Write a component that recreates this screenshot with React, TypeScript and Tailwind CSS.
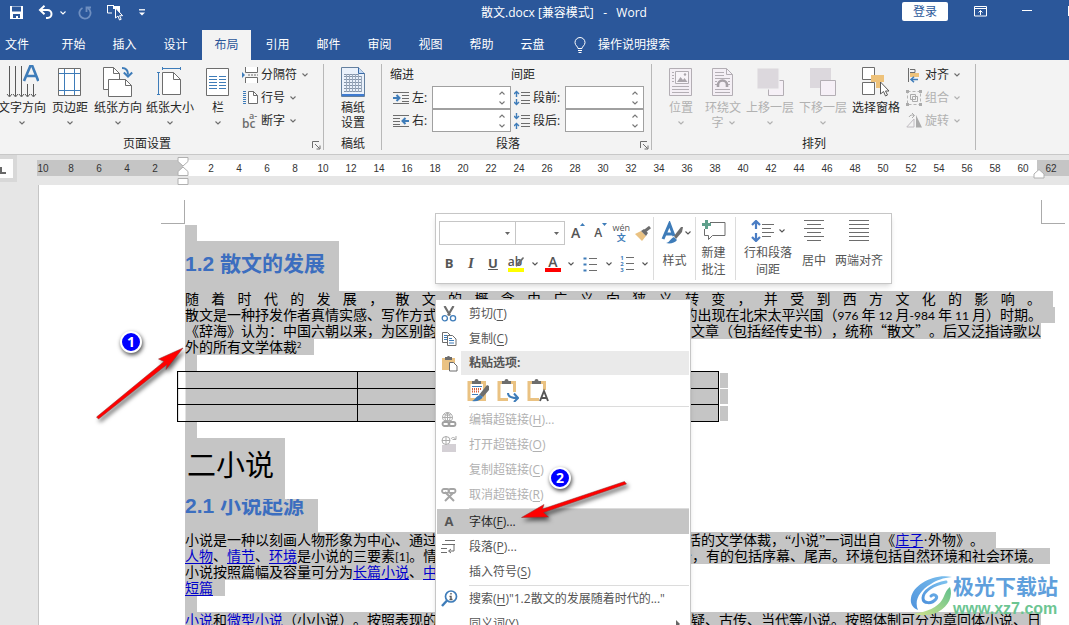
import type { ReactNode } from 'react'
import { clsx } from 'clsx'

const tabs = ['开始', '插入', '设计', '布局', '引用', '邮件', '审阅', '视图', '帮助', '云盘']

const rulerLeft = [10, 8, 6, 4, 2]
const rulerRight = Array.from({ length: 30 }, (_, i) => (i + 1) * 2)

const tableRows = ['h-[17px]', 'h-4', 'h-[17px]']

type IconProps = {
  w: number
  h: number
  children: ReactNode
  className?: string
}

function Icon({ w, h, children, className }: IconProps) {
  return (
    <svg
      width={w}
      height={h}
      viewBox={`0 0 ${w} ${h}`}
      fill="none"
      aria-hidden="true"
      className={clsx('shrink-0', className)}
    >
      {children}
    </svg>
  )
}

function Chevron({ className }: { className?: string }) {
  return (
    <Icon w={6} h={4} className={className}>
      <path d="M.5 .5 3 3 5.5 .5" stroke="currentColor" strokeWidth="1.1" />
    </Icon>
  )
}

/* ---------- ribbon icons ---------- */

const TextDirectionIcon = () => (
  <Icon w={34} h={34}>
    <path d="M4.500 1v30M10.500 1v30M16.500 1v30M22.500 19v12M28.500 19v12" stroke="#595959" />
    <path
      d="M2 29l2.500 3 2.500-3M8 29l2.500 3 2.500-3M14 29l2.500 3 2.500-3M20 29l2.500 3 2.500-3M26 29l2.500 3 2.500-3"
      stroke="#595959"
    />
    <path d="M19 16 25.300 1h2L33.300 16M21 11h10.500" stroke="#3e7cb9" strokeWidth="2.600" />
  </Icon>
)

const MarginsIcon = () => (
  <Icon w={24} h={30}>
    <path d="M.5 1.500h22v27H.5z" fill="#fff" stroke="#6d6d6d" />
    <path d="M6.500 2v26M16.500 2v26M1 6.500h21M1 23.500h21" stroke="#3e7cb9" />
  </Icon>
)

const OrientationIcon = () => (
  <Icon w={30} h={32}>
    <path d="M.5 1.500h10l6 6v16H.5z" fill="#fff" stroke="#6d6d6d" />
    <path d="M10.500 1.500v6h6" stroke="#6d6d6d" />
    <path d="M5.500 13.500h17l6 6v11h-23z" fill="#fff" stroke="#6d6d6d" />
    <path d="M22.500 13.500v6h6" stroke="#6d6d6d" />
    <path d="M19 2c4.500 0 6 2.500 6 6.500M20.800 6.500l4.200 4 4.200-4" stroke="#3e7cb9" strokeWidth="2" />
  </Icon>
)

const SizeIcon = () => (
  <Icon w={26} h={30}>
    <path d="M5.500 5.500h11l7 7v15h-18z" fill="#fff" stroke="#6d6d6d" />
    <path d="M16.500 5.500v7h7" stroke="#6d6d6d" />
    <path d="M5.500 1.500h18M5.500 0v3M23.500 0v3M1.500 5.500v22M0 5.500h3M0 27.500h3" stroke="#3e7cb9" />
  </Icon>
)

const ColumnsIcon = () => (
  <Icon w={24} h={30}>
    <path d="M.5 1.500h22v27H.5z" fill="#fff" stroke="#6d6d6d" />
    <path
      d="M3 9.500h8M3 12.500h8M3 15.500h8M3 18.500h8M3 21.500h8M13 9.500h7M13 12.500h7M13 15.500h7M13 18.500h7M13 21.500h7"
      stroke="#3e7cb9"
    />
  </Icon>
)

const BreaksIcon = () => (
  <Icon w={16} h={16}>
    <path d="M3.500 0v5.500h12V0M3.500 16v-5.500h12V16" fill="#fff" stroke="#6d6d6d" />
    <path d="M6 8h10" stroke="#6d6d6d" strokeDasharray="2 1" />
    <path d="M0 5v6l3-3z" fill="#3e7cb9" />
  </Icon>
)

const LineNumbersIcon = () => (
  <Icon w={16} h={16}>
    <path d="M6.500 1.500h5l4 4v8h-9z" fill="#fff" stroke="#6d6d6d" />
    <path d="M11.500 1.500v4h4" stroke="#6d6d6d" />
    <path d="M2.500 1v14" stroke="#3e7cb9" strokeWidth="3" strokeDasharray="1 1" />
  </Icon>
)

const HyphenIcon = () => (
  <Icon w={16} h={16} className="overflow-visible">
    <text x="0" y="15" fontSize="12" fontWeight="600" fill="#6d6d6d">
      bc
    </text>
    <text x="7" y="6" fontSize="9" fontWeight="600" fill="#6d6d6d">
      a-
    </text>
  </Icon>
)

const ManuscriptIcon = () => (
  <Icon w={24} h={32}>
    <path d="M.5 1.500h17l6 6v23H.5z" fill="#eaf1fb" stroke="#64809f" />
    <path d="M17.500 1.500v6h6" fill="#c4d9f3" stroke="#3a6aa5" />
    <path
      d="M3 8.500h14M3 10.500h18M3 13.500h18M3 16.500h18M3 19.500h18M3 22.500h18M3 25.500h18"
      stroke="#8594a8"
      strokeWidth="1"
    />
    <path d="M5.500 8v18M8.500 8v18M11.500 8v18M14.500 8v18M17.500 8v18M20.500 10v16" stroke="#9aa9bd" />
    <path d="M1 29h22" stroke="#3f7bd0" strokeWidth="2" />
  </Icon>
)

function IndentIcon({ right }: { right?: boolean }) {
  return (
    <Icon w={16} h={14}>
      {right ? (
        <>
          <path d="M0 1.500h16M0 4.500h7M0 7.500h7M0 10.500h7M0 12.500h16" stroke="#6d6d6d" />
          <path d="M16 7H10M12.500 4 9.500 7l3 3" stroke="#3e7cb9" strokeWidth="2" />
        </>
      ) : (
        <>
          <path d="M0 1.500h16M9 4.500h7M9 7.500h7M9 10.500h7M0 12.500h16" stroke="#6d6d6d" />
          <path d="M0 7h6M3.500 4l3 3-3 3" stroke="#3e7cb9" strokeWidth="2" />
        </>
      )}
    </Icon>
  )
}

function SpacingIcon({ after }: { after?: boolean }) {
  return (
    <Icon w={16} h={16}>
      <path d="M7 2.500h9M7 5.500h9M7 10.500h9M7 13.500h9" stroke="#6d6d6d" />
      {after ? (
        <path d="M2.500 0v5M0 3l2.500 2.500L5 3M2.500 16v-5M0 13l2.500-2.500L5 13" stroke="#3e7cb9" strokeWidth="1.400" />
      ) : (
        <path d="M2.500 7V2M0 4l2.500-2.500L5 4M2.500 9v5M0 12l2.500 2.500L5 12" stroke="#3e7cb9" strokeWidth="1.400" />
      )}
    </Icon>
  )
}

const PositionIcon = () => (
  <Icon w={24} h={30}>
    <path d="M.5 1.500h22v27H.5z" fill="#f4eff5" stroke="#b3aeb4" />
    <path d="M3 5.500h2M3 8.500h2M3 11.500h2M3 14.500h2M3 19.500h17M3 22.500h17M3 25.500h17" stroke="#b3aeb4" />
    <path d="M6.500 4.500h13v12h-13z" fill="#f8f4f9" stroke="#b3aeb4" />
    <path d="M8 15l3.500-5 2.500 3 1.500-2 3 4z" fill="#aaa5ab" />
    <circle cx="16" cy="7.500" r="1.200" fill="#aaa5ab" />
  </Icon>
)

const WrapIcon = () => (
  <Icon w={22} h={30}>
    <path d="M.5 1.500h14l6 6v21H.5z" fill="#f4eff5" stroke="#b3aeb4" />
    <path d="M14.500 1.500v6h6" stroke="#b3aeb4" />
    <path d="M3 5.500h9M3 8.500h9M3 11.500h15M3 22.500h15M3 25.500h15M3 14.500h2M3 17.500h2M16 14.500h2M16 17.500h2" stroke="#b3aeb4" />
    <path d="M6 20v-2a4.500 4.500 0 0 1 9 0v2" stroke="#a6a1a7" strokeWidth="2.600" />
  </Icon>
)

const ForwardIcon = () => (
  <Icon w={27} h={30}>
    <path d="M11.500 13.500h15v15h-15z" fill="#f6f0f7" stroke="#b3aeb4" />
    <path d="M0 1h22v21H0z" fill="#dcd8dd" stroke="#f2f2f2" strokeWidth="1" />
  </Icon>
)

const BackwardIcon = () => (
  <Icon w={27} h={30}>
    <path d="M0 1h21v20H0z" fill="#dcd8dd" />
    <path d="M10.500 13.500h15v15h-15z" fill="#f6f0f7" stroke="#b3aeb4" />
  </Icon>
)

const SelectionPaneIcon = () => (
  <Icon w={28} h={32}>
    <path d="M.5 1.500h12v12H.5zM.5 16.500h12v12H.5z" fill="#fff" stroke="#6d6d6d" />
    <path d="M9 9h13v7h-4v6h-4v-6H9z" fill="#eec27a" />
    <path d="M18.500 16v12l3-2.500 2 4.500 2-1-2-4h3.500z" fill="#fff" stroke="#595959" />
  </Icon>
)

const AlignIcon = () => (
  <Icon w={14} h={16}>
    <path d="M1.500 1v14M3 2.500h5v3H3" stroke="#6d6d6d" />
    <path d="M3 6h9v4H3z" fill="#eec27a" />
    <path d="M11 12.500H4M7 9.800 4 12.500 7 15.200" stroke="#3e7cb9" strokeWidth="1.500" />
  </Icon>
)

const GroupIcon = () => (
  <Icon w={16} h={16}>
    <path d="M1.500 1.500h13v13h-13z" stroke="#b5b5b5" strokeDasharray="3 2" />
    <path d="M4.500 4.500h5v5h-5zM6.500 6.500h5v5h-5z" stroke="#ababab" />
    <path d="M0 0h3v3H0zM13 0h3v3h-3zM0 13h3v3H0zM13 13h3v3h-3z" fill="#ababab" />
  </Icon>
)

const RotateIcon = () => (
  <Icon w={16} h={16}>
    <path d="M8 6v8H.800z" stroke="#c0bcc1" />
    <path d="M10 2v12.500h6z" fill="#ababab" />
    <path d="M3 4c1-2 3-2.500 5-1.500M6 0l2.500 2.500L6 5" stroke="#ababab" />
  </Icon>
)

const LauncherIcon = () => (
  <Icon w={9} h={9}>
    <path d="M.5 7V.5H7M3 3l4.500 4.500M8 4.500V8H4.500" stroke="#6d6d6d" />
  </Icon>
)

/* ---------- ribbon parts ---------- */

type BigButtonProps = {
  icon: ReactNode
  label: string
  className: string
  chevron?: boolean
  disabled?: boolean
}

function BigButton({ icon, label, className, chevron = true, disabled }: BigButtonProps) {
  return (
    <button
      type="button"
      disabled={disabled}
      className={clsx(
        'flex shrink-0 flex-col items-center whitespace-nowrap leading-[15px]',
        disabled ? 'text-[#b1b1b1]' : 'text-[#262626]',
        className
      )}
    >
      <span className="flex h-[37px] items-center">{icon}</span>
      <span>{label}</span>
      {chevron && (
        <span className="flex h-[15px] items-center">
          <Chevron className={disabled ? '' : 'text-[#6d6d6d]'} />
        </span>
      )}
    </button>
  )
}

function SmallButton({ icon, label, disabled }: { icon: ReactNode; label: string; disabled?: boolean }) {
  return (
    <button
      type="button"
      disabled={disabled}
      className={clsx('flex h-[23px] items-center gap-[3px]', disabled ? 'text-[#b1b1b1]' : 'text-[#262626]')}
    >
      <span className="flex w-4 justify-center">{icon}</span>
      <span>{label}</span>
      <Chevron className={clsx('ml-0.5', !disabled && 'text-[#6d6d6d]')} />
    </button>
  )
}

type RibbonGroupProps = {
  title: string
  className: string
  titleClass?: string
  launcher?: boolean
  children: ReactNode
}

function RibbonGroup({ title, className, titleClass, launcher, children }: RibbonGroupProps) {
  return (
    <section className={clsx('relative flex shrink-0 flex-col pt-[3px]', className)}>
      <div className="flex h-[73px]">{children}</div>
      <div className="flex h-4 items-center">
        <h2 className={clsx('flex-1 text-center', titleClass)}>{title}</h2>
      </div>
      {launcher && (
        <button type="button" aria-label={title + '设置'} className="absolute right-[3px] bottom-1">
          <LauncherIcon />
        </button>
      )}
      <span className="absolute top-1 right-0 bottom-1 w-px bg-[#b8b8b8]" />
    </section>
  )
}

function SpinField({ id, label, icon, labelClass }: { id: string; label: string; icon: ReactNode; labelClass: string }) {
  return (
    <div className="flex h-[23px] items-center">
      <label htmlFor={id} className={clsx('flex items-center gap-[3px] pl-[3px] whitespace-nowrap', labelClass)}>
        {icon}
        {label}
      </label>
      <div className="flex h-[23px] w-[79px] items-center border border-[#a0a0a0] bg-white text-[#777]">
        <input id={id} type="text" className="h-full min-w-0 flex-1 bg-transparent px-1 outline-none" />
        <span className="flex flex-col gap-[6px] pr-[5px]">
          <Chevron className="rotate-180" />
          <Chevron />
        </span>
      </div>
    </div>
  )
}

function TitleBar() {
  return (
    <header className="flex h-[30px] shrink-0 text-white">
      <div className="flex h-[25px] w-[226px] shrink-0 items-center pl-[9px]">
        <button type="button" aria-label="保存">
          <Icon w={15} h={15}>
            <path d="M1 1h13v13H1z" fill="#fff" />
            <path d="M3 1.500h9v5H3zM4 9h7v4H9v-2H7v2H4z" fill="#2b579a" />
          </Icon>
        </button>
        <button type="button" aria-label="撤消" className="ml-[14px]">
          <Icon w={16} h={15}>
            <path d="M2 5h7.500a4 4 0 0 1 0 8H8M6.500 .8 2 5l4.500 4.200" stroke="#fff" strokeWidth="2" />
          </Icon>
        </button>
        <Chevron className="ml-1.5" />
        <button type="button" aria-label="重复" className="ml-3">
          <Icon w={14} h={14}>
            <path d="M4.500 2A5.600 5.600 0 1 0 10 2.300M8.500 6V1.500H13" stroke="#6f8fc0" strokeWidth="1.800" />
          </Icon>
        </button>
        <button type="button" aria-label="选择对象" className="ml-[14px]">
          <Icon w={17} h={17}>
            <path d="M1 1.500h7M1.500 1v8H6" stroke="#fff" />
            <path d="M7 2h7v8h-3V5H7z" fill="#fff" />
            <path d="M9.500 4v10l2.500-2 1.500 4 1.700-.7-1.600-3.600h3z" fill="#2b579a" stroke="#fff" />
          </Icon>
        </button>
        <button type="button" aria-label="自定义快速访问工具栏" className="ml-4">
          <Icon w={6} h={7}>
            <path d="M0 .8h6" stroke="#fff" strokeWidth="1.300" />
            <path d="M0 3.500h6l-3 3z" fill="#fff" />
          </Icon>
        </button>
      </div>
      <h1 className="h-[25px] flex-1 text-center text-xs leading-[25px] whitespace-pre">
        散文.docx [兼容模式]   -   Word
      </h1>
      <div className="flex w-[167px] shrink-0 items-start">
        <button type="button" className="mt-0.5 h-[19px] w-[46px] rounded-xs bg-white text-xs leading-[19px] text-[#2b579a]">
          登录
        </button>
        <button type="button" aria-label="功能区显示选项" className="mt-1.5 ml-[26px]">
          <Icon w={13} h={11}>
            <path d="M.5 .5h12v9.500H.5zM.5 2.500h12M6.500 9V4.500M4.500 6.500l2-2 2 2" stroke="#fff" />
          </Icon>
        </button>
        <button type="button" aria-label="最小化" className="mt-2.5 ml-[35px] h-px w-2.5 bg-white" />
        <button type="button" aria-label="最大化" className="mt-1.5 ml-auto h-2.5 w-px bg-white" />
      </div>
    </header>
  )
}

function TabBar() {
  return (
    <nav className="flex h-[30px] shrink-0 text-xs leading-7 text-white">
      <button type="button" className="w-12 shrink-0 pl-[5px] text-left">
        文件
      </button>
      {tabs.map((tab) => (
        <button
          key={tab}
          type="button"
          className={clsx('w-[51px] shrink-0 border-x border-[#2b579a]', tab === '布局' && 'bg-[#f3f3f3] text-[#2b579a]')}
        >
          {tab}
        </button>
      ))}
      <button type="button" className="ml-4 flex items-center gap-3">
        <Icon w={12} h={16}>
          <path d="M4 11.500c0-2-3-3-3-6a5 5 0 0 1 10 0c0 3-3 4-3 6zM4 13.500h4M4.500 15.500h3" stroke="#fff" />
        </Icon>
        操作说明搜索
      </button>
    </nav>
  )
}

function Ribbon() {
  return (
    <div className="flex h-[95px] shrink-0 overflow-hidden border-b border-[#c8c8c8] bg-[#f3f3f3] text-xs text-[#262626]">
      <RibbonGroup title="页面设置" launcher className="w-[324px]" titleClass="pr-[30px]">
        <BigButton icon={<TextDirectionIcon />} label="文字方向" className="-ml-0.5 w-12" />
        <BigButton icon={<MarginsIcon />} label="页边距" className="w-12" />
        <BigButton icon={<OrientationIcon />} label="纸张方向" className="w-12" />
        <BigButton icon={<SizeIcon />} label="纸张大小" className="w-14" />
        <BigButton icon={<ColumnsIcon />} label="栏" className="w-10" />
        <div className="pl-1">
          <SmallButton icon={<BreaksIcon />} label="分隔符" />
          <SmallButton icon={<LineNumbersIcon />} label="行号" />
          <SmallButton icon={<HyphenIcon />} label="断字" />
        </div>
      </RibbonGroup>
      <RibbonGroup title="稿纸" className="w-[58px]">
        <button type="button" className="mx-auto flex w-6 flex-col items-center leading-[15px]">
          <span className="flex h-[37px] items-center">
            <ManuscriptIcon />
          </span>
          稿纸设置
        </button>
      </RibbonGroup>
      <RibbonGroup title="段落" launcher className="w-[270px]" titleClass="pr-[18px]">
        <div className="pl-2">
          <h3 className="leading-[23px]">缩进</h3>
          <SpinField id="indent-left" label="左:" icon={<IndentIcon />} labelClass="w-[42px]" />
          <SpinField id="indent-right" label="右:" icon={<IndentIcon right />} labelClass="w-[42px]" />
        </div>
        <div>
          <h3 className="leading-[23px]">间距</h3>
          <SpinField id="space-before" label="段前:" icon={<SpacingIcon />} labelClass="w-[54px]" />
          <SpinField id="space-after" label="段后:" icon={<SpacingIcon after />} labelClass="w-[54px]" />
        </div>
      </RibbonGroup>
      <RibbonGroup title="排列" className="w-[324px]">
        <BigButton icon={<PositionIcon />} label="位置" disabled className="ml-2 w-[42px]" />
        <button type="button" disabled className="flex w-[42px] flex-col items-center leading-[15px] text-[#b1b1b1]">
          <span className="flex h-[37px] items-center">
            <WrapIcon />
          </span>
          <span>环绕文</span>
          <span className="flex items-center gap-[5px]">
            字<Chevron />
          </span>
        </button>
        <BigButton icon={<ForwardIcon />} label="上移一层" disabled className="w-[52px]" />
        <BigButton icon={<BackwardIcon />} label="下移一层" disabled className="w-[54px]" />
        <BigButton icon={<SelectionPaneIcon />} label="选择窗格" chevron={false} className="w-[52px]" />
        <div className="pl-1">
          <SmallButton icon={<AlignIcon />} label="对齐" />
          <SmallButton icon={<GroupIcon />} label="组合" disabled />
          <SmallButton icon={<RotateIcon />} label="旋转" disabled />
        </div>
      </RibbonGroup>
    </div>
  )
}

function Ruler() {
  return (
    <div className="flex h-[30px] shrink-0 overflow-hidden font-['Liberation_Sans',sans-serif] text-[10px] leading-[18px] text-[#333]">
      <div className="mr-5 h-[27px] w-[17px] shrink-0 border-y-4 border-r-4 border-[#d8d8d8] bg-[#fdfdfd]">
        <Icon w={6} h={19}>
          <path d="M1 8v6h5" stroke="#666" strokeWidth="2" />
        </Icon>
      </div>
      <div className="mt-[5px] flex h-4 w-[146px] shrink-0 justify-end overflow-hidden bg-[#c5c5c5] pr-[14px]">
        {rulerLeft.map((n) => (
          <span key={n} className="w-7 shrink-0 text-center">
            {n}
          </span>
        ))}
      </div>
      <div className="relative mt-[5px] flex h-4 shrink-0 bg-white pl-[14px]">
        {rulerRight.map((n) => (
          <span key={n} className="w-7 shrink-0 text-center">
            {n}
          </span>
        ))}
        <Icon w={12} h={28} className="absolute -top-[3px] -left-[6px]">
          <path d="M1 .5h10v4L6 9 1 4.500zM1 18.500v-4L6 10l5 4.500v4zM1 21.500h10v6H1z" fill="#fff" stroke="#b0b0b0" />
        </Icon>
        <Icon w={12} h={10} className="absolute top-[9px] -right-[8px] z-10">
          <path d="M1 9V5l5-4.500L11 5v4z" fill="#fff" stroke="#b0b0b0" />
        </Icon>
      </div>
      <div className="mt-[5px] h-4 flex-1 bg-[#c5c5c5]">
        <span className="block w-7 text-center">62</span>
      </div>
    </div>
  )
}

/* ---------- document ---------- */

function Link({ children }: { children: ReactNode }) {
  return (
    <a href="#" className="text-[#0000cc] underline underline-offset-2">
      {children}
    </a>
  )
}

function Num({ children }: { children: ReactNode }) {
  return <span className="font-['Lato',sans-serif] text-xs leading-[14px]">{children}</span>
}

// One laid out line: the start and the end of the text sit at the two margins.
function Line({ start, end, className }: { start: ReactNode; end: ReactNode; className: string }) {
  return (
    <div className={clsx('flex h-4 justify-between bg-[#c5c5c5] whitespace-nowrap', className)}>
      <span>{start}</span>
      <span>{end}</span>
    </div>
  )
}

const EmptyLine = () => <div className="h-4 w-3 bg-[#c5c5c5]" />

function DocumentPage() {
  return (
    <article className="relative ml-[38px] flex-1 overflow-hidden border-l border-[#c5c5c5] bg-white pt-10 pl-[146px] font-['Noto_Sans_CJK_SC',sans-serif] text-sm leading-[14px] text-black [text-spacing-trim:space-all]">
      <span className="absolute top-[15px] left-[122px] h-6 w-6 border-r border-b border-[#ababab]" />
      <span className="absolute top-[15px] left-[1002px] h-6 w-6 border-b border-l border-[#ababab]" />
      <EmptyLine />
      <h2 className="h-[50px] w-[154px] bg-[#c5c5c5] font-['Liberation_Sans','Noto_Sans_CJK_SC',sans-serif] text-[21px] leading-[46px] font-bold text-[#3c6ebf]">
        1.2 散文的发展
      </h2>
      <p className="h-4 w-[868px] bg-[#c5c5c5] pr-3 whitespace-nowrap [text-align-last:justify]">
        随着时代的发展，散文的概念由广义向狭义转变，并受到西方文化的影响。
      </p>
      <Line
        className="w-[870px] pr-[13px]"
        start="散文是一种抒发作者真情实感、写作方式"
        end={
          <>
            的出现在北宋太平兴国（<Num>976 </Num>年<Num> 12 </Num>月<Num>-984 </Num>年<Num> 11 </Num>月）时期。
          </>
        }
      />
      <Line
        className="w-[856px]"
        start="《辞海》认为：中国六朝以来，为区别韵"
        end="文章（包括经传史书），统称“散文”。后又泛指诗歌以"
      />
      <p className="h-4 w-[129px] bg-[#c5c5c5]">
        外的所有文学体裁<span className="align-[4px] text-[8px] leading-none">2</span>
      </p>
      <EmptyLine />
      <table className="-ml-2 table-fixed border-collapse">
        <tbody>
          {tableRows.map((height, i) => (
            <tr key={i} className={height}>
              <td className="w-[180px] border border-black bg-linear-to-r from-white from-[7px] to-[#c5c5c5] to-[7px] p-0" />
              <td className="w-[180px] border border-black bg-[#c5c5c5] p-0" />
              <td className="w-[181px] border border-black bg-[#c5c5c5] p-0" />
              <td className="p-0 pl-px">
                <div className="h-[15px] w-2 bg-[#c5c5c5]" />
              </td>
            </tr>
          ))}
        </tbody>
      </table>
      <EmptyLine />
      <h1 className="h-[61px] w-[100px] bg-[#c5c5c5] pl-0.5 text-[29px] leading-[50px]">二小说</h1>
      <h2 className="h-[33px] w-[133px] overflow-hidden bg-[#c5c5c5] font-['Liberation_Sans','Noto_Sans_CJK_SC',sans-serif] text-[21px] leading-[13px] font-bold text-[#3c6ebf]">
        2.1 小说起源
      </h2>
      <Line
        className="w-[811px] pr-3"
        start="小说是一种以刻画人物形象为中心、通过"
        end={
          <>
            活的文学体裁，<span className="font-['Liberation_Serif',serif]">“</span>小说
            <span className="font-['Liberation_Serif',serif]">”</span>一词出自《<Link>庄子</Link>
            <span className="font-['Liberation_Serif',serif]">·</span>外物》。
          </>
        }
      />
      <Line
        className="w-[865px] pr-2"
        start={
          <>
            <Link>人物</Link>、<Link>情节</Link>、<Link>环境</Link>是小说的三要素<Num>[1]</Num>。情
          </>
        }
        end="分，有的包括序幕、尾声。环境包括自然环境和社会环境。"
      />
      <p className="h-4 w-[440px] bg-[#c5c5c5]">
        小说按照篇幅及容量可分为<Link>长篇小说</Link>、<Link>中</Link>
      </p>
      <p className="h-4 w-10 bg-[#c5c5c5]">
        <Link>短篇</Link>
      </p>
      <EmptyLine />
      <Line
        className="w-[856px]"
        start={
          <>
            <Link>小说</Link>和<Link>微型小说</Link>（小小说）。按照表现的
          </>
        }
        end="疑、古传、当代等小说。按照体制可分为章回体小说、日"
      />
    </article>
  )
}

/* ---------- floating toolbar ---------- */

function Combo({ label, className }: { label: string; className: string }) {
  return (
    <div className={clsx('flex h-6 items-center border border-[#c6c6c6]', className)}>
      <input type="text" aria-label={label} className="h-full min-w-0 flex-1 bg-transparent px-1 outline-none" />
      <Icon w={5} h={3} className="mr-[5px]">
        <path d="M0 0h5L2.500 3z" fill="#666" />
      </Icon>
    </div>
  )
}

function BrushIcon() {
  return (
    <Icon w={16} h={15}>
      <path d="M0 8l6-3 5 5-4 5z" fill="#eac282" />
      <path d="M6 5l3-2 4 4-2 3z" fill="#6d6d6d" />
      <path d="M10 5l5-4" stroke="#6d6d6d" strokeWidth="3" />
    </Icon>
  )
}

function ListLines({ numbered }: { numbered?: boolean }) {
  return (
    <span className="flex gap-0.5">
      {numbered ? (
        <span aria-hidden="true" className="flex w-1 flex-col text-[6px] leading-[6px] font-bold text-[#3e7cb9]">
          <span>1</span>
          <span>2</span>
          <span>3</span>
        </span>
      ) : (
        <Icon w={4} h={17}>
          <path d="M.5 1.500h3v2h-3zM.5 7.500h3v2h-3zM.5 13.500h3v2h-3z" fill="#3e7cb9" />
        </Icon>
      )}
      <Icon w={8} h={17}>
        <path d="M0 2.500h8M0 8.500h8M0 14.500h8" stroke="#6d6d6d" />
      </Icon>
    </span>
  )
}

function TextLines({ widths }: { widths: number[] }) {
  return (
    <Icon w={20} h={22}>
      {widths.map((w, i) => (
        <path key={i} d={`M${(20 - w) / 2} ${i * 4 + 0.5}h${w}`} stroke="#6d6d6d" />
      ))}
    </Icon>
  )
}

function MiniToolbar() {
  return (
    <div
      role="toolbar"
      aria-label="格式"
      className="absolute top-[58px] left-[435px] flex h-[71px] w-[457px] border border-[#c6c6c6] bg-white py-[3px] text-xs text-[#555] shadow-md"
    >
      <div className="w-[218px] border-r border-[#dcdcdc] pt-1 pl-[3px]">
        <div className="flex items-center">
          <Combo label="字体" className="w-[77px]" />
          <Combo label="字号" className="-ml-px w-[50px]" />
          <button type="button" aria-label="增大字号" className="ml-1.5 flex items-start">
            <span aria-hidden="true" className="text-sm leading-5 font-semibold">A</span>
            <Icon w={5} h={3}>
              <path d="M0 3h5L2.500 0z" fill="#3e7cb9" />
            </Icon>
          </button>
          <button type="button" aria-label="减小字号" className="ml-[9px] flex items-start">
            <span aria-hidden="true" className="text-xs leading-5 font-semibold">A</span>
            <Icon w={5} h={3}>
              <path d="M0 0h5L2.500 3z" fill="#3e7cb9" />
            </Icon>
          </button>
          <button type="button" className="ml-1.5 flex w-4 flex-col items-center text-[9px] leading-[10px]">
            <span>wén</span>
            <span className="font-bold text-[#3e7cb9]">文</span>
          </button>
          <button type="button" aria-label="格式刷" className="ml-1.5">
            <BrushIcon />
          </button>
        </div>
        <div className="mt-[7px] flex h-6 items-center">
          <button type="button" className="w-5 text-[13px] font-bold">B</button>
          <button type="button" className="w-6 font-['Liberation_Serif',serif] text-[15px] font-bold italic">I</button>
          <button type="button" className="w-5 text-[13px] font-bold underline">U</button>
          <button type="button" aria-label="突出显示" className="ml-[5px] flex w-4 flex-col items-center">
            <span className="flex h-3 items-center text-xs font-semibold">
              <span aria-hidden="true">ab</span>
              <Icon w={8} h={12} className="-ml-1.5">
                <path d="M0 11l1-4 6-6 1 1-5 7z" fill="#6d6d6d" />
              </Icon>
            </span>
            <span className="h-1 w-4 bg-[#ffff00]" />
          </button>
          <Chevron className="ml-2" />
          <button type="button" aria-label="字体颜色" className="ml-[7px] flex flex-col items-center">
            <span aria-hidden="true" className="h-3 text-sm leading-3 font-semibold">A</span>
            <span className="h-1 w-4 bg-[#ff0000]" />
          </button>
          <Chevron className="ml-[7px]" />
          <button type="button" aria-label="项目符号" className="ml-[9px]">
            <ListLines />
          </button>
          <Chevron className="ml-[9px]" />
          <button type="button" aria-label="编号" className="ml-2">
            <ListLines numbered />
          </button>
          <Chevron className="ml-2" />
        </div>
      </div>
      <button type="button" className="flex w-[42px] flex-col items-center border-r border-[#dcdcdc] pt-1">
        <span className="flex items-center">
          <Icon w={26} h={24}>
            <path d="M4 18 10.500 3 15 15M6.500 13h7" stroke="#3e7cb9" strokeWidth="3" />
            <path d="M15 15 22 6l2 0-1 5-6 7z" fill="#6d6d6d" />
            <path d="M7 22c3 0 4-4 8-6l3 3c-2 3-7 4-11 3z" fill="#3e7cb9" />
          </Icon>
          <Chevron />
        </span>
        <span className="leading-8">样式</span>
      </button>
      <button type="button" className="flex w-10 flex-col items-center border-r border-[#dcdcdc] pt-[3px] pr-1 leading-[17px]">
        <Icon w={24} h={22}>
          <path d="M8 2.500h15v13H10.500l-4 4v-4h-4V9" stroke="#6d6d6d" />
          <path d="M4.500 0v9M0 4.500h9" stroke="#5fa08c" strokeWidth="3" />
        </Icon>
        <span className="mt-0.5 w-6">新建批注</span>
      </button>
      <button type="button" className="flex w-[60px] flex-col items-center pt-[3px] pl-1 leading-[17px]">
        <span className="flex items-center">
          <Icon w={24} h={22}>
            <path d="M5 9V1.500M1 5l4-4 4 4M5 13v7.500M1 17l4 4 4-4" stroke="#4a7dc4" strokeWidth="2.200" />
            <path d="M11 4.500h12M11 8.500h9M11 12.500h12M11 16.500h9" stroke="#6d6d6d" />
          </Icon>
          <Chevron className="ml-1" />
        </span>
        <span className="mt-0.5 w-12">行和段落间距</span>
      </button>
      <button type="button" className="flex w-9 flex-col items-center pt-[3px]">
        <TextLines widths={[20, 14, 20, 14, 20, 14]} />
        <span className="leading-[38px]">居中</span>
      </button>
      <button type="button" className="flex w-[54px] flex-col items-center pt-[3px] whitespace-nowrap">
        <TextLines widths={[20, 20, 20, 20, 20, 20]} />
        <span className="leading-[38px]">两端对齐</span>
      </button>
    </div>
  )
}

/* ---------- context menu ---------- */

const CutIcon = () => (
  <Icon w={16} h={16}>
    <path d="M3.500 0l5.500 9.500M12.500 0L7 9.500" stroke="#6d6d6d" strokeWidth="2.200" />
    <circle cx="3.800" cy="12.300" r="2.600" stroke="#3e7cb9" strokeWidth="1.300" />
    <circle cx="12" cy="12.300" r="2.600" stroke="#3e7cb9" strokeWidth="1.300" />
  </Icon>
)

const CopyIcon = () => (
  <Icon w={16} h={16}>
    <path d="M1.500 1.500h5l3 3v7h-8z" fill="#fff" stroke="#6d6d6d" />
    <path d="M3 4.500h3M3 6.500h3M3 8.500h3" stroke="#3e7cb9" />
    <path d="M6.500 4.500h5l3.500 3.500v6.500H6.500z" fill="#fff" stroke="#6d6d6d" />
    <path d="M8 7.500h3M8 9.500h5M8 12h5" stroke="#3e7cb9" />
  </Icon>
)

const PasteIcon = () => (
  <Icon w={16} h={17}>
    <path d="M0 3h13v12H0z" fill="#eac282" />
    <path d="M3 2h2a1.600 1.600 0 0 1 3 0h2v3H3z" fill="#6d6d6d" />
    <path d="M7.500 7.500h4l3.500 3.500v5h-7.500z" fill="#fff" stroke="#6d6d6d" />
  </Icon>
)

function Clipboard({ children }: { children: ReactNode }) {
  return (
    <Icon w={22} h={24}>
      <path d="M2 4.500h15.500v17H2z" fill="#fff" stroke="#eac282" strokeWidth="3" />
      <path d="M5 3h2.500a2 2 0 0 1 4 0H14v3H5z" fill="#6d6d6d" />
      {children}
    </Icon>
  )
}

const GlobeLinkIcon = () => (
  <Icon w={16} h={17}>
    <path d="M1.500 6.500a5 5 0 0 1 10 0c0 1-.3 2-1 3H3c-1-1-1.500-2-1.500-3zM1.500 6.500h10M6.500 1.500v8M3.500 3.500c2 1 4 1 6 0M4.500 9c-1-2.500-1-5 2-7.500 3 2.500 3 5 2 7.500" stroke="#ababab" />
    <rect x="1.500" y="11" width="7" height="4" rx="2" stroke="#a0a0a0" strokeWidth="1.800" />
    <rect x="7.500" y="11" width="7" height="4" rx="2" stroke="#a0a0a0" strokeWidth="1.800" />
  </Icon>
)

const OpenLinkIcon = () => (
  <Icon w={16} h={17}>
    <path d="M1 9h5l1-1h8v8H1z" fill="#d4d0d5" />
    <circle cx="5" cy="4.500" r="4" stroke="#ababab" />
    <path d="M1 4.500h8M5 .5v8M10 3c1-2 3-2 4.500 0M15 0v3.500h-3.500" stroke="#ababab" />
  </Icon>
)

const RemoveLinkIcon = () => (
  <Icon w={16} h={15}>
    <rect x="1" y="2" width="7" height="4" rx="2" stroke="#a5a5a5" strokeWidth="1.800" />
    <rect x="7.500" y="2" width="7" height="4" rx="2" stroke="#a5a5a5" strokeWidth="1.800" />
    <path d="M4 5l9 9M12 6l-8 8" stroke="#a5a5a5" strokeWidth="2" />
  </Icon>
)

const ParagraphIcon = () => (
  <Icon w={14} h={14}>
    <path d="M4 .5h10M1 4.500h13M0 8.500h6M0 12.500h6M13 5v6H8M10 9l-2.500 2 2.500 2" stroke="#6d6d6d" />
  </Icon>
)

const SmartLookupIcon = () => (
  <Icon w={17} h={17}>
    <circle cx="10" cy="6.500" r="5.500" stroke="#3e7cb9" strokeWidth="1.700" />
    <path d="M6 10.500 1 16" stroke="#3e7cb9" strokeWidth="2.400" />
    <path d="M10 3v1.500M8.500 6.500H10v3M8.500 9.500h3" stroke="#595959" strokeWidth="1.400" />
  </Icon>
)

type MenuItemProps = {
  icon?: ReactNode
  label: string
  hotkey: string
  tail?: string
  disabled?: boolean
  active?: boolean
  submenu?: boolean
}

function MenuItem({ icon, label, hotkey, tail, disabled, active, submenu }: MenuItemProps) {
  return (
    <button
      type="button"
      role="menuitem"
      disabled={disabled}
      className={clsx(
        'flex h-[25px] w-full items-center text-left whitespace-nowrap',
        disabled && 'text-[#b1b1b1]',
        active && 'bg-[#c5c5c5] text-[#262626]'
      )}
    >
      <span className="flex w-8 shrink-0 items-center pl-1">{icon}</span>
      <span>
        {label}(<u className="underline-offset-2">{hotkey}</u>){tail}
      </span>
      {submenu && (
        <Icon w={4} h={8} className="mr-[9px] ml-auto">
          <path d="M0 0v8l4-4z" fill="#666" />
        </Icon>
      )}
    </button>
  )
}

const Separator = () => <div role="separator" className="ml-8 h-0.5 border-b border-[#dcdcdc]" />

function ContextMenu() {
  return (
    <div
      role="menu"
      className="absolute top-[144px] left-[435px] w-[256px] border border-[#c6c6c6] bg-white p-px text-xs text-[#555] shadow-md"
    >
      <MenuItem icon={<CutIcon />} label="剪切" hotkey="T" />
      <MenuItem icon={<CopyIcon />} label="复制" hotkey="C" />
      <div className="flex h-6 items-center">
        <span className="w-6 pl-[5px]">
          <PasteIcon />
        </span>
        <span className="h-6 flex-1 bg-[#eaeaea] pl-2 leading-6 font-bold">粘贴选项:</span>
      </div>
      <div className="flex h-[30px] items-center gap-2 pl-[30px]">
        <button type="button" aria-label="保留源格式">
          <Clipboard>
            <path d="M5 8.500h10M5 16.500h6" stroke="#3e7cb9" />
            <path d="M5 11h10M5 13.500h8" stroke="#d9603b" strokeDasharray="1 1" strokeWidth="2" />
            <path d="M12 17l8-10 2 1v4l-6 7z" fill="#6d6d6d" />
            <path d="M5 23c3-1 4-5 8-6l3 2c-2 3-6 5-11 4z" fill="#3e7cb9" />
          </Clipboard>
        </button>
        <button type="button" aria-label="合并格式">
          <Clipboard>
            <path d="M11 14h11v10H11z" fill="#fff" />
            <path d="M11 15c0 4 3 5 9 5M17 15.500l4 4.500-4 4" stroke="#3e7cb9" strokeWidth="2" />
          </Clipboard>
        </button>
        <button type="button" aria-label="只保留文本">
          <Clipboard>
            <path d="M12 12h10v12H12z" fill="#fff" />
            <path d="M13 23l4-10 4 10M14.500 20h5" stroke="#555" strokeWidth="1.900" />
          </Clipboard>
        </button>
      </div>
      <Separator />
      <MenuItem icon={<GlobeLinkIcon />} label="编辑超链接" hotkey="H" tail="..." disabled />
      <MenuItem icon={<OpenLinkIcon />} label="打开超链接" hotkey="O" disabled />
      <MenuItem label="复制超链接" hotkey="C" disabled />
      <MenuItem icon={<RemoveLinkIcon />} label="取消超链接" hotkey="R" disabled />
      <Separator />
      <MenuItem
        icon={<span className="w-4 text-center text-[13px] font-bold text-[#555]">A</span>}
        label="字体"
        hotkey="F"
        tail="..."
        active
      />
      <MenuItem icon={<ParagraphIcon />} label="段落" hotkey="P" tail="..." />
      <MenuItem label="插入符号" hotkey="S" />
      <Separator />
      <MenuItem icon={<SmartLookupIcon />} label="搜索" hotkey="H" tail={'"1.2散文的发展随着时代的..."'} />
      <MenuItem label="同义词" hotkey="Y" submenu />
    </div>
  )
}

/* ---------- callouts and watermark ---------- */

function Step({ n, className }: { n: number; className: string }) {
  return (
    <span
      className={clsx(
        'absolute flex h-[22px] w-[22px] items-center justify-center rounded-full border-2 border-white bg-[#0000ff] text-sm font-bold text-white shadow-[1px_2px_4px_rgba(0,0,0,0.7)]',
        className
      )}
    >
      {n}
    </span>
  )
}

function Watermark() {
  return (
    <div className="absolute right-[11px] bottom-[6px] flex items-center">
      <Icon w={44} h={42}>
        <defs>
          <linearGradient id="swoosh" x1="0" y1="1" x2="1" y2="0">
            <stop offset="0" stopColor="#4f93dc" />
            <stop offset="1" stopColor="#7cc0ee" />
          </linearGradient>
          <linearGradient id="leaf" x1="0" y1="1" x2="1" y2="0">
            <stop offset="0" stopColor="#d2e48c" />
            <stop offset="1" stopColor="#5fbf8c" />
          </linearGradient>
        </defs>
        <path d="M43 2C26-2 4 9 2 23c-1 6 2 10 7 12C5 26 10 16 22 9c6-4 12-6 21-7z" fill="url(#swoosh)" />
        <path
          d="M37 7C25 9 14 16 14 23c0 6 9 6 13 1 2-3-2-6-5-3"
          stroke="url(#swoosh)"
          strokeWidth="3"
          strokeLinecap="round"
        />
        <path d="M41 12c3 9-1 19-12 25-8 4-17 4-25 2 14-2 25-7 29-14 3-5 3-9 8-13z" fill="url(#leaf)" />
      </Icon>
      <div className="flex flex-col">
        <span className="text-[21px] leading-[26px] font-bold text-[#5f9fdc]">极光下载站</span>
        <span className="font-['Liberation_Sans',sans-serif] text-base leading-5 font-bold text-[#6cc592]">www.xz7.com</span>
      </div>
    </div>
  )
}

function Arrows() {
  return (
    <Icon w={640} h={280} className="pointer-events-none absolute top-[155px] left-0">
      <g transform="translate(0 -310)" fill="#ff0000" className="drop-shadow-[2px_3px_2px_rgba(0,0,0,0.6)]">
        <path d="M183 348 158.500 359l5.500 2.500L96.500 417l2 2L167 364.500l-1 5z" stroke="#8a3030" strokeWidth=".5" />
        <path d="M521.500 517.500 544 504.500l-1.500 4.500L624.500 481.500l2 2.500L543.500 512.500l5 4.500z" stroke="#8a3030" strokeWidth=".5" />
      </g>
    </Icon>
  )
}

export default function App() {
  return (
    <div className="flex h-screen flex-col overflow-hidden bg-[#2b579a] font-['Open_Sans','Noto_Sans_CJK_SC',sans-serif]">
      <TitleBar />
      <TabBar />
      <Ribbon />
      <main className="relative flex min-h-0 flex-1 flex-col overflow-hidden bg-[#e6e6e6]">
        <Ruler />
        <DocumentPage />
        <MiniToolbar />
        <ContextMenu />
        <Arrows />
        <Step n={1} className="top-[176px] left-[120px]" />
        <Step n={2} className="top-[312px] left-[549px]" />
        <Watermark />
      </main>
    </div>
  )
}
